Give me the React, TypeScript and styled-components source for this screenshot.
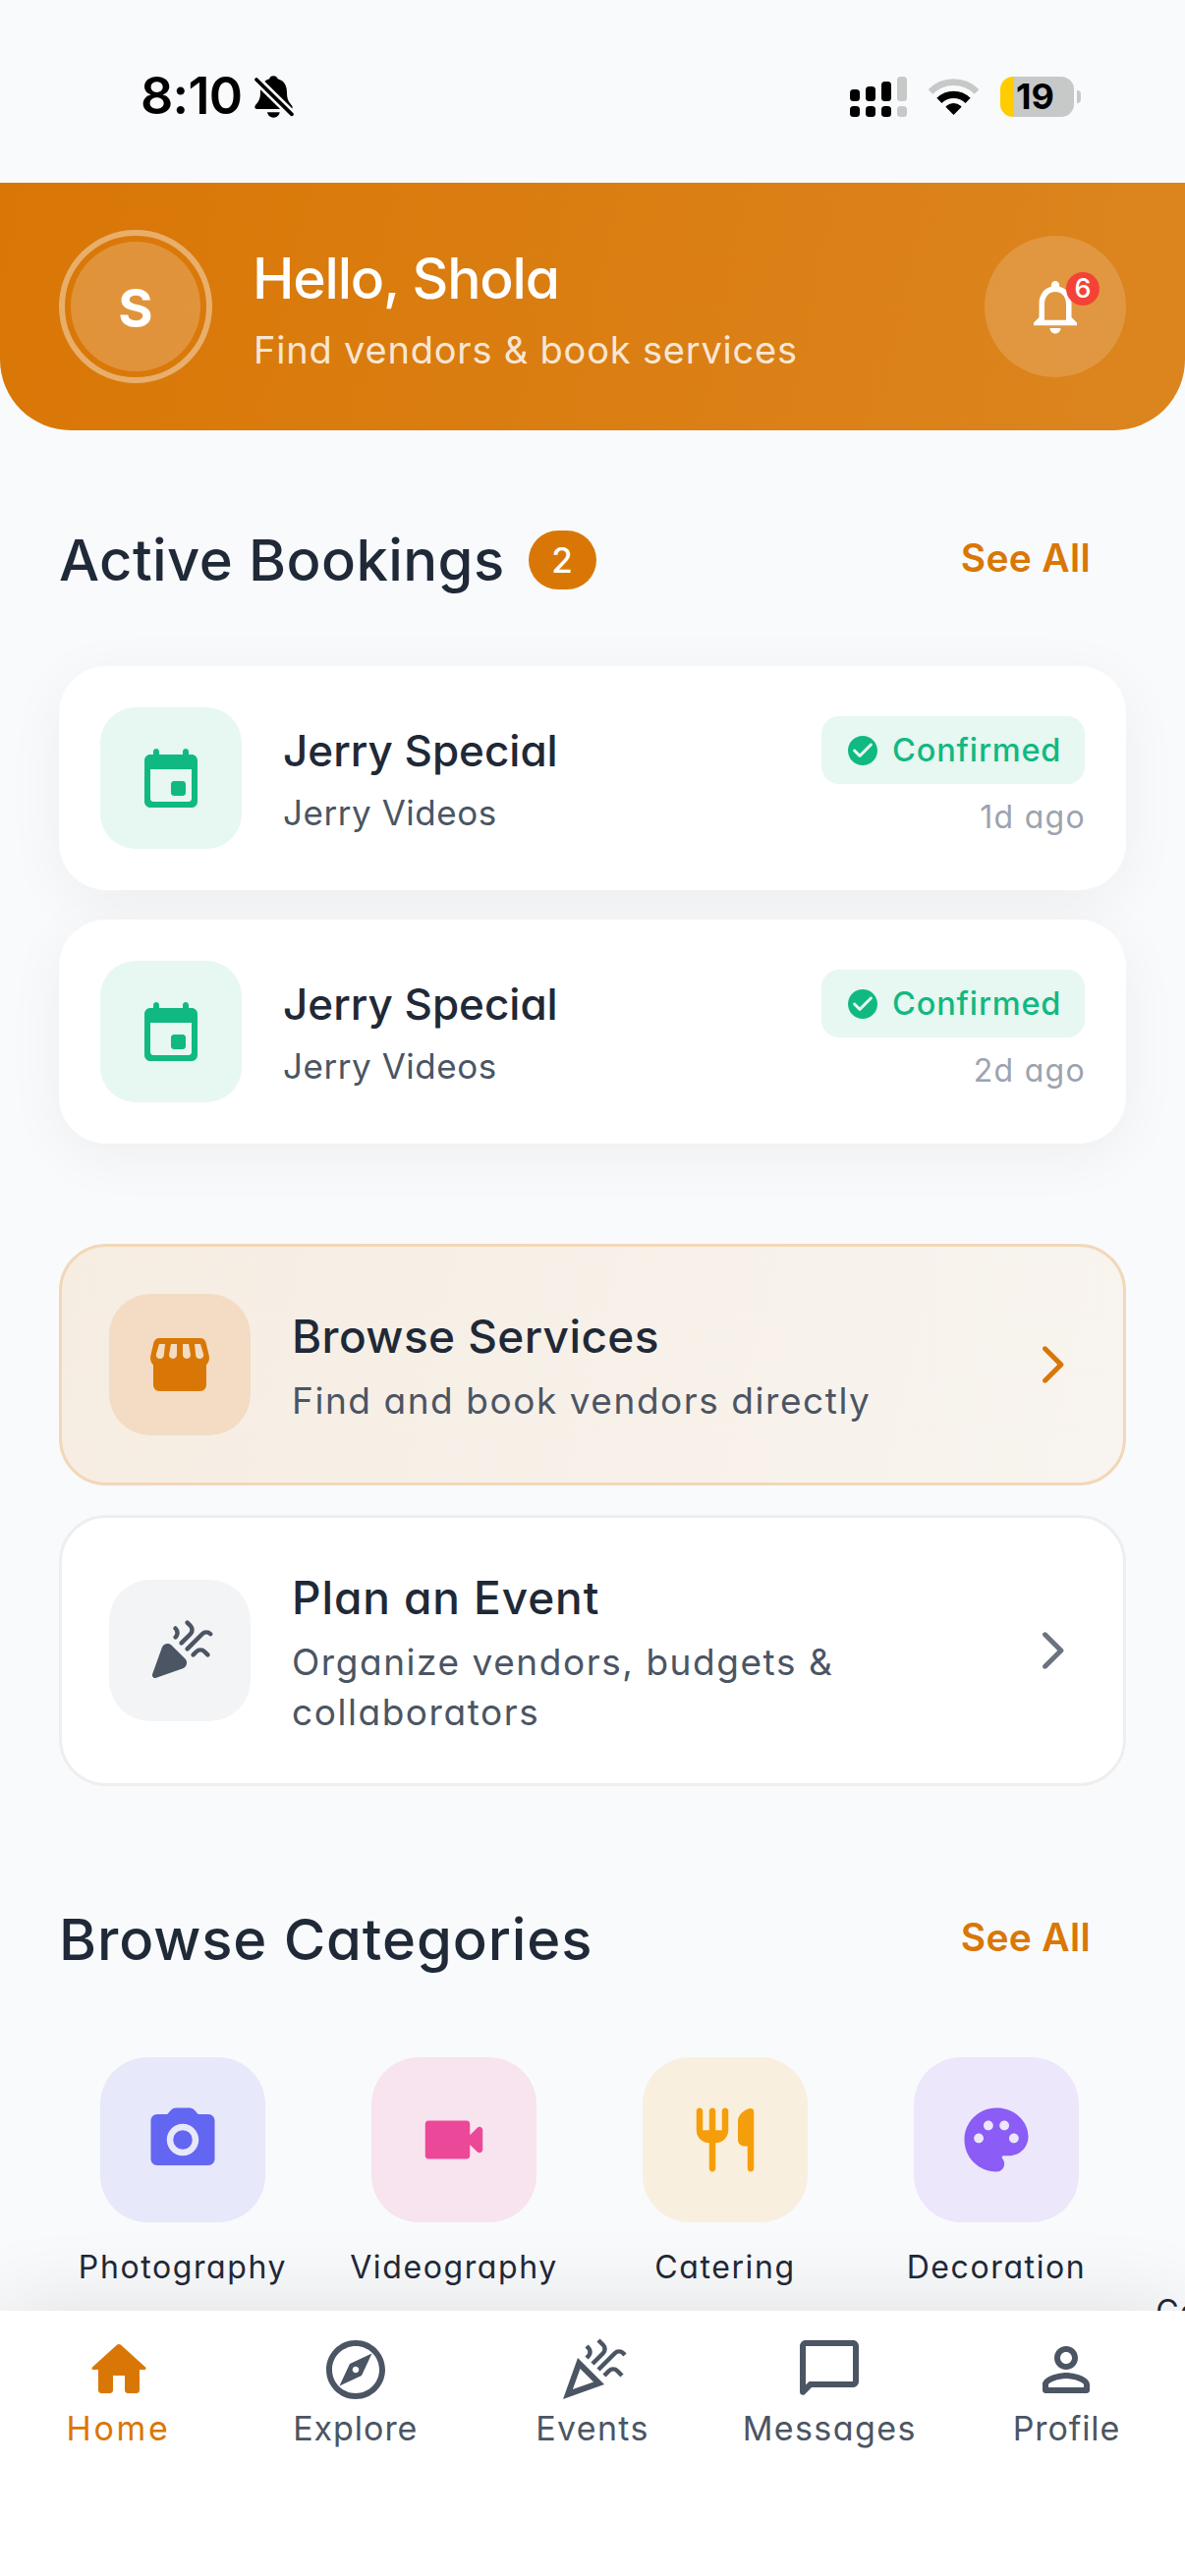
import React from 'react';
import styled, { createGlobalStyle } from 'styled-components';

const color = {
  brand: '#D97706',
  ink: '#1F2937',
  body: '#4B5563',
  muted: '#6B7280',
  faint: '#9CA3AF',
  success: '#10B981',
  surface: '#F9FAFC',
};

const GlobalStyle = createGlobalStyle`
  * { box-sizing: border-box; }
  body {
    margin: 0;
    background: ${color.surface};
    font-family: Inter, "Noto Sans", sans-serif;
    font-feature-settings: "cv11";
    -webkit-font-smoothing: antialiased;
  }
  h1, h2, h3, p { margin: 0; font-weight: inherit; font-size: inherit; }
  button { font: inherit; font-feature-settings: inherit; border: 0; background: none; padding: 0; }
  svg { display: block; flex: none; }
`;

/* ---------- icons ---------- */

const paths = {
  bell: 'M12 22c1.1 0 2-.9 2-2h-4c0 1.1.9 2 2 2zm6-6v-5c0-3.07-1.63-5.64-4.5-6.32V4c0-.83-.67-1.5-1.5-1.5s-1.5.67-1.5 1.5v.68C7.64 5.36 6 7.92 6 11v5l-2 2v1h16v-1l-2-2zm-2 1H8v-6c0-2.48 1.51-4.5 4-4.5s4 2.02 4 4.5v6z',
  event: 'M16 13h-3c-.55 0-1 .45-1 1v3c0 .55.45 1 1 1h3c.55 0 1-.45 1-1v-3c0-.55-.45-1-1-1zm0-10v1H8V3c0-.55-.45-1-1-1s-1 .45-1 1v1H5c-1.11 0-1.99.9-1.99 2L3 20c0 1.1.89 2 2 2h14c1.1 0 2-.9 2-2V6c0-1.1-.9-2-2-2h-1V3c0-.55-.45-1-1-1s-1 .45-1 1zm2 17H6c-.55 0-1-.45-1-1V9h14v10c0 .55-.45 1-1 1z',
  check: 'M12 2C6.48 2 2 6.48 2 12s4.48 10 10 10 10-4.48 10-10S17.52 2 12 2zM9.29 16.29L5.7 12.7c-.39-.39-.39-1.02 0-1.41.39-.39 1.02-.39 1.41 0L10 14.17l6.88-6.88c.39-.39 1.02-.39 1.41 0 .39.39.39 1.02 0 1.41l-7.59 7.59c-.38.39-1.02.39-1.41 0z',
  store: 'M5.05 3h13.9c.9 0 1.7.62 1.9 1.52L21.9 8.9c.25 1 0 2.1-.62 2.88L21 12.1V19a2 2 0 0 1-2 2H5a2 2 0 0 1-2-2v-6.9l-.28-.3c-.64-.8-.86-1.87-.62-2.9L3.15 4.52C3.36 3.63 4.15 3 5.05 3zM5 5h2L6.6 8.8C6.5 9.5 6 10 5.35 10 4.4 10 3.75 9.25 3.98 8.4zM9 5h2v3.7c0 .72-.6 1.3-1.35 1.3-.8 0-1.38-.65-1.3-1.4zM13 5h2l.65 3.6c.08.75-.5 1.4-1.3 1.4-.75 0-1.35-.58-1.35-1.3zM17 5h2l1.02 3.4c.23.85-.42 1.6-1.37 1.6-.65 0-1.15-.5-1.25-1.2z',
  chevron: 'M7.38 21.01c.49.49 1.28.49 1.77 0l8.31-8.31c.39-.39.39-1.02 0-1.41L9.15 2.98c-.49-.49-1.28-.49-1.77 0s-.49 1.28 0 1.77L14.62 12l-7.25 7.25c-.48.48-.48 1.28.01 1.76z',
  camera: 'M12 9a3 3 0 1 0 0 6 3 3 0 0 0 0-6zM20 4h-3.17l-1.24-1.35A1.99 1.99 0 0 0 14.12 2H9.88c-.56 0-1.1.24-1.48.65L7.17 4H4c-1.1 0-2 .9-2 2v12c0 1.1.9 2 2 2h16c1.1 0 2-.9 2-2V6c0-1.1-.9-2-2-2zm-8 13c-2.76 0-5-2.24-5-5s2.24-5 5-5 5 2.24 5 5-2.24 5-5 5z',
  video: 'M17 10.5V7c0-.55-.45-1-1-1H4c-.55 0-1 .45-1 1v10c0 .55.45 1 1 1h12c.55 0 1-.45 1-1v-3.5l2.29 2.29c.63.63 1.71.18 1.71-.71V8.91c0-.89-1.08-1.34-1.71-.71L17 10.5z',
  restaurant: 'M16 6v6c0 1.1.9 2 2 2h1v7c0 .55.45 1 1 1s1-.45 1-1V3.13c0-.65-.61-1.13-1.24-.98C17.6 2.68 16 4.51 16 6zm-5 3H9V3c0-.55-.45-1-1-1s-1 .45-1 1v6H5V3c0-.55-.45-1-1-1s-1 .45-1 1v6c0 2.21 1.79 4 4 4v8c0 .55.45 1 1 1s1-.45 1-1v-8c2.21 0 4-1.79 4-4V3c0-.55-.45-1-1-1s-1 .45-1 1v6z',
  palette: 'M12 2C6.49 2 2 6.49 2 12s4.49 10 10 10c1.38 0 2.5-1.12 2.5-2.5 0-.61-.23-1.2-.64-1.67-.08-.1-.13-.21-.13-.33 0-.28.22-.5.5-.5H16c3.31 0 6-2.69 6-6 0-4.96-4.49-9-10-9zm5.5 11c-.83 0-1.5-.67-1.5-1.5s.67-1.5 1.5-1.5 1.5.67 1.5 1.5-.67 1.5-1.5 1.5zm-3-4c-.83 0-1.5-.67-1.5-1.5S13.67 6 14.5 6s1.5.67 1.5 1.5S15.33 9 14.5 9zM5 11.5c0-.83.67-1.5 1.5-1.5s1.5.67 1.5 1.5S7.33 13 6.5 13 5 12.33 5 11.5zm6-4c0 .83-.67 1.5-1.5 1.5S8 8.33 8 7.5 8.67 6 9.5 6s1.5.67 1.5 1.5z',
  home: 'M10 19v-5h4v5c0 .55.45 1 1 1h3c.55 0 1-.45 1-1v-7h1.7c.46 0 .68-.57.33-.87L12.67 3.6c-.38-.34-.96-.34-1.34 0l-8.36 7.53c-.34.3-.13.87.33.87H5v7c0 .55.45 1 1 1h3c.55 0 1-.45 1-1z',
  explore: 'M12 2C6.48 2 2 6.48 2 12s4.48 10 10 10 10-4.48 10-10S17.52 2 12 2zm0 18c-4.41 0-8-3.59-8-8s3.59-8 8-8 8 3.59 8 8-3.59 8-8 8zm-5.5-2.5l7.51-3.49L17.5 6.5 9.99 9.99 6.5 17.5zm5.5-6.6c.61 0 1.1.49 1.1 1.1s-.49 1.1-1.1 1.1-1.1-.49-1.1-1.1.49-1.1 1.1-1.1z',
  chat: 'M4 4h16v12H5.17L4 17.17V4m0-2c-1.1 0-1.99.9-1.99 2v15.59c0 .89 1.08 1.34 1.71.71L6 18h14c1.1 0 2-.9 2-2V4c0-1.1-.9-2-2-2H4z',
  person: 'M12 6c1.1 0 2 .9 2 2s-.9 2-2 2-2-.9-2-2 .9-2 2-2m0 9c2.7 0 5.8 1.29 6 2v1H6v-.99c.2-.72 3.3-2.01 6-2.01m0-11C9.79 4 8 5.79 8 8s1.79 4 4 4 4-1.79 4-4-1.79-4-4-4zm0 9c-2.67 0-8 1.34-8 4v2c0 .55.45 1 1 1h14c.55 0 1-.45 1-1v-2c0-2.66-5.33-4-8-4z',
  coneSolid: 'M3.99 21.29l9.04-3.23c1.38-.49 1.78-2.26.74-3.3l-4.53-4.53c-1.04-1.04-2.8-.64-3.3.74l-3.23 9.04c-.28.8.48 1.56 1.28 1.28z',
  coneOutline: 'M2 22l14-5-9-9L2 22zm10.35-5.82L5.3 18.7l2.52-7.05 4.53 4.53z',
  people: 'M16 11c1.66 0 3-1.34 3-3s-1.34-3-3-3-3 1.34-3 3 1.34 3 3 3zm-8 0c1.66 0 3-1.34 3-3S9.66 5 8 5 5 6.34 5 8s1.34 3 3 3zm0 2c-2.33 0-7 1.17-7 3.5V19h14v-2.500c0-2.33-4.67-3.500-7-3.500z',
};

type IconName = keyof typeof paths;

const Icon = ({ name, size }: { name: IconName; size: number }) => (
  <svg width={size} height={size} viewBox="0 0 24 24" fill="currentColor" fillRule="evenodd">
    <path d={paths[name]} />
  </svg>
);

const PopperIcon = ({ size, solid }: { size: number; solid?: boolean }) => (
  <svg width={size} height={size} viewBox="0 0 24 24" fill="currentColor" fillRule="evenodd">
    <path d={solid ? paths.coneSolid : paths.coneOutline} />
    <path
      d={
        solid
          ? 'M14.53 11.47l5.06-5.06c.78-.78 2.05-.78 2.83 0M10.5 4.5l.09.09c.78.78.78 2.05 0 2.83l-.06.06M16.53 13.47l1.06-1.06c.78-.78 2.05-.78 2.83 0l1.06 1.06M12.53 9.47l3.06-3.06c.78-.78.78-2.05 0-2.83l-1.06-1.05'
          : 'M14 12l5.59-5.59c.78-.78 2.05-.78 2.83 0l.59.59M10 4l.59.59c.78.78.78 2.05 0 2.83L10 8M16 14l1.59-1.59c.78-.78 2.05-.78 2.83 0L22 14M12 10l3.59-3.59c.78-.78.78-2.05 0-2.83L14 2'
      }
      fill="none"
      stroke="currentColor"
      strokeWidth="1.5"
      strokeLinecap={solid ? 'round' : 'butt'}
    />
  </svg>
);

const SilentIcon = () => (
  <svg width="40" height="43" viewBox="0 0 120 129">
    <path d="M58 1c8 0 12 5 13 9C92 16 99 32 99 52c0 22 6 28 14 38 5 7 4 12-4 12H8c-7 0-9-6-5-12C12 80 18 72 18 52 18 32 26 15 46 10 47 5 50 1 58 1z" />
    <path d="M39 112h38c-1 9-9 16-19 16s-18-7-19-16z" />
    <path d="M-6 0L122 126" stroke={color.surface} strokeWidth="27" />
    <path d="M6 12l108 106" stroke="#000" strokeWidth="11" strokeLinecap="round" />
  </svg>
);

const WifiIcon = () => (
  <svg width="51" height="37" viewBox="0 0 152 111">
    <path d="M5.3 40.3a100 100 0 0 1 141.4 0" fill="none" stroke="#C7C9C9" strokeWidth="20" />
    <path d="M32.2 67.2a62 62 0 0 1 87.6 0" fill="none" stroke="#000" strokeWidth="22" />
    <path d="M76 111L53 88q-2-3 1-5a34 34 0 0 1 44 0q3 2 1 5z" />
  </svg>
);

/* ---------- shell ---------- */

const Screen = styled.div`
  width: 1206px;
  height: 2622px;
  display: flex;
  flex-direction: column;
  overflow: hidden;
  background: ${color.surface};
`;

const Body = styled.main`
  flex: 1;
  min-height: 0;
  overflow: hidden;
  display: flex;
  flex-direction: column;
`;

/* ---------- status bar ---------- */

const StatusBar = styled.div`
  flex: none;
  display: flex;
  justify-content: space-between;
  align-items: center;
  height: 186px;
  padding: 10px 106px 0 143px;
`;

const StatusGroup = styled.div<{ $gap: number }>`
  display: flex;
  align-items: center;
  gap: ${(p) => p.$gap}px;
`;

const Clock = styled.span`
  font-size: 52px;
  font-weight: 600;
  line-height: 60px;
  letter-spacing: -0.7px;
`;

const Signal = styled.div`
  display: flex;
  align-items: flex-end;
  gap: 6px;
`;

const SignalColumn = styled.div`
  display: flex;
  flex-direction: column;
  gap: 5px;
`;

const SignalCell = styled.span<{ $h: number; $off?: boolean }>`
  width: 10px;
  height: ${(p) => p.$h}px;
  border-radius: 3.5px;
  background: ${(p) => (p.$off ? '#C7C9C9' : '#000')};
`;

const BatteryWrap = styled.div`
  display: flex;
  align-items: center;
  gap: 3px;
`;

const Battery = styled.div`
  display: flex;
  align-items: center;
  width: 75px;
  height: 41px;
  padding-left: 16px;
  border-radius: 13px;
  background: linear-gradient(90deg, #ffcc00 14px, #c7c9c9 14px);
  font-size: 36px;
  font-weight: 700;
`;

const BatteryNub = styled.span`
  width: 4px;
  height: 13px;
  border-radius: 0 5px 5px 0;
  background: #c7c9c9;
`;

/* ---------- header ---------- */

const Header = styled.header`
  flex: none;
  display: flex;
  align-items: center;
  height: 252px;
  padding: 0 60px;
  border-radius: 0 0 72px 72px;
  background: linear-gradient(102deg, #d97706, #dc851f);
  color: #fff;
`;

const AvatarRing = styled.div`
  flex: none;
  width: 156px;
  height: 156px;
  padding: 6px;
  border: 6px solid rgba(255, 255, 255, 0.4);
  border-radius: 50%;
`;

const Avatar = styled.div`
  display: flex;
  align-items: center;
  justify-content: center;
  height: 100%;
  padding-top: 3px;
  border-radius: 50%;
  background: rgba(255, 255, 255, 0.2);
  font-size: 54px;
  font-weight: 650;
`;

const Greeting = styled.div`
  flex: 1;
  padding: 3px 0 0 42px;
`;

const Hello = styled.h1`
  margin-left: -1px;
  font-size: 57px;
  font-weight: 500;
  line-height: 84px;
  letter-spacing: -1.2px;
`;

const Tagline = styled.p`
  font-size: 38px;
  font-weight: 400;
  line-height: 60px;
  letter-spacing: 0.8px;
  color: rgba(255, 255, 255, 0.84);
`;

const BellButton = styled.button`
  position: relative;
  display: flex;
  align-items: center;
  justify-content: center;
  width: 144px;
  height: 144px;
  border-radius: 50%;
  background: rgba(255, 255, 255, 0.16);
  color: #fff;
`;

const BellCount = styled.span`
  position: absolute;
  left: 83px;
  top: 37px;
  width: 34px;
  height: 34px;
  border-radius: 50%;
  background: #f44336;
  font-size: 27px;
  font-weight: 500;
  line-height: 34px;
  text-align: center;
`;

/* ---------- sections ---------- */

const Section = styled.section<{ $top: number; $gap: number }>`
  flex: none;
  display: flex;
  flex-direction: column;
  gap: ${(p) => p.$gap}px;
  margin-top: ${(p) => p.$top}px;
`;

const SectionHead = styled.div`
  display: flex;
  align-items: center;
  height: 90px;
  padding: 0 96px 0 60px;
`;

const SectionTitle = styled.h2<{ $track: number }>`
  font-size: 58px;
  font-weight: 500;
  line-height: 88px;
  letter-spacing: ${(p) => p.$track}px;
  color: ${color.ink};
`;

const CountPill = styled.span`
  width: 69px;
  height: 60px;
  margin-left: 24px;
  border-radius: 30px;
  background: ${color.brand};
  color: #fff;
  font-size: 35px;
  font-weight: 500;
  line-height: 60px;
  text-align: center;
`;

const SeeAll = styled.button`
  margin: 0 0 4px auto;
  font-size: 39px;
  font-weight: 600;
  line-height: 60px;
  letter-spacing: 0.3px;
  color: ${color.brand};
`;

const CardList = styled.div`
  display: flex;
  flex-direction: column;
  gap: 30px;
  padding: 0 60px;
`;

const IconTile = styled.div<{ $bg: string; $fg: string; $size?: number; $radius: number }>`
  flex: none;
  display: flex;
  align-items: center;
  justify-content: center;
  width: ${(p) => p.$size ?? 144}px;
  height: ${(p) => p.$size ?? 144}px;
  border-radius: ${(p) => p.$radius}px;
  background: ${(p) => p.$bg};
  color: ${(p) => p.$fg};
`;

const BookingCard = styled.article`
  display: flex;
  align-items: center;
  height: 228px;
  padding: 0 42px;
  border-radius: 48px;
  background: #fff;
  box-shadow: 0 12px 60px rgba(0, 0, 0, 0.05);
`;

const BookingInfo = styled.div`
  flex: 1;
  padding: 4px 0 0 42px;
`;

const BookingTitle = styled.h3`
  font-size: 44px;
  font-weight: 500;
  line-height: 66px;
  letter-spacing: 0;
  color: ${color.ink};
`;

const BookingVendor = styled.p`
  font-size: 35px;
  font-weight: 400;
  line-height: 60px;
  letter-spacing: 0.55px;
  color: ${color.body};
`;

const BookingMeta = styled.div`
  display: flex;
  flex-direction: column;
  align-items: flex-end;
  gap: 9px;
  padding-top: 2px;
`;

const StatusPill = styled.span`
  display: flex;
  align-items: center;
  gap: 12px;
  width: 268px;
  height: 69px;
  padding-left: 24px;
  border-radius: 18px;
  background: #e7f7f1;
  color: ${color.success};
  font-size: 32.5px;
  font-weight: 500;
  letter-spacing: 0.85px;
  white-space: nowrap;
`;

const TimeAgo = styled.span`
  margin-right: -1px;
  font-size: 32px;
  font-weight: 400;
  line-height: 50px;
  letter-spacing: 1.3px;
  color: ${color.faint};
`;

const ActionCard = styled.article<{ $primary?: boolean }>`
  display: flex;
  align-items: center;
  height: ${(p) => (p.$primary ? 246 : 276)}px;
  padding: 0 48px;
  border: 3px solid ${(p) => (p.$primary ? '#f2d7b8' : '#eeeeee')};
  border-radius: 48px;
  background: ${(p) => (p.$primary ? 'linear-gradient(103deg, #f6ede2, #f8f4ef)' : '#fff')};
  color: ${(p) => (p.$primary ? color.brand : color.muted)};
`;

const ActionText = styled.div`
  flex: 1;
  display: flex;
  flex-direction: column;
  gap: 7px;
  padding-left: 42px;
`;

const ActionTitle = styled.h3<{ $track: number }>`
  font-size: 46px;
  font-weight: 500;
  line-height: 66px;
  letter-spacing: ${(p) => p.$track}px;
  color: ${color.ink};
`;

const ActionNote = styled.p`
  max-width: 640px;
  font-size: 37px;
  font-weight: 400;
  line-height: 51px;
  letter-spacing: 1.55px;
  color: ${color.body};
`;

/* ---------- categories ---------- */

const CategoryRow = styled.div`
  display: flex;
  gap: 24px;
  width: 1440px;
  padding-left: 60px;
`;

const Category = styled.div`
  display: flex;
  flex-direction: column;
  align-items: center;
  gap: 23px;
  width: 252px;
`;

const CategoryLabel = styled.span`
  font-size: 32px;
  font-weight: 400;
  line-height: 45px;
  letter-spacing: 1.6px;
  text-align: center;
  color: ${color.ink};
`;

/* ---------- tab bar ---------- */

const TabBar = styled.nav`
  flex: none;
  position: relative;
  display: grid;
  grid-template-columns: repeat(5, 1fr);
  height: 270px;
  padding-top: 24px;
  background: #fff;
  box-shadow: 0 0 90px rgba(0, 0, 0, 0.11);
`;

const Tab = styled.a<{ $active?: boolean }>`
  display: flex;
  flex-direction: column;
  align-items: center;
  color: ${(p) => (p.$active ? color.brand : color.body)};
`;

const TabLabel = styled.span<{ $track: number }>`
  font-size: 34px;
  font-weight: 400;
  line-height: 48px;
  letter-spacing: ${(p) => p.$track}px;
`;

/* ---------- data ---------- */

const signalColumns = [12, 15, 20, 25];

const bookings = [
  { title: 'Jerry Special', vendor: 'Jerry Videos', status: 'Confirmed', time: '1d ago' },
  { title: 'Jerry Special', vendor: 'Jerry Videos', status: 'Confirmed', time: '2d ago' },
];

const categories: { label: string; icon: IconName; fg: string; bg: string }[] = [
  { label: 'Photography', icon: 'camera', fg: '#6366F1', bg: '#E7E8FA' },
  { label: 'Videography', icon: 'video', fg: '#EC4899', bg: '#F7E4EE' },
  { label: 'Catering', icon: 'restaurant', fg: '#F59E0B', bg: '#F9EFDE' },
  { label: 'Decoration', icon: 'palette', fg: '#8B5CF6', bg: '#ECE7FB' },
  { label: 'Event Co\u2011ordination', icon: 'people', fg: '#10B981', bg: '#E0F4EF' },
];

const tabs: { label: string; icon: IconName | 'popper'; track: number }[] = [
  { label: 'Home', icon: 'home', track: 2.7 },
  { label: 'Explore', icon: 'explore', track: 0.95 },
  { label: 'Events', icon: 'popper', track: 1.3 },
  { label: 'Messages', icon: 'chat', track: 1.4 },
  { label: 'Profile', icon: 'person', track: 0.9 },
];

/* ---------- app ---------- */

export default function App() {
  return (
    <Screen>
      <GlobalStyle />
      <StatusBar>
        <StatusGroup $gap={13}>
          <Clock>8:10</Clock>
          <SilentIcon />
        </StatusGroup>
        <StatusGroup $gap={22}>
          <Signal>
            {signalColumns.map((h, i) => (
              <SignalColumn key={h}>
                <SignalCell $h={h} $off={i === 3} />
                <SignalCell $h={11} $off={i === 3} />
              </SignalColumn>
            ))}
          </Signal>
          <WifiIcon />
          <BatteryWrap>
            <Battery>19</Battery>
            <BatteryNub />
          </BatteryWrap>
        </StatusGroup>
      </StatusBar>

      <Body>
        <Header>
          <AvatarRing>
            <Avatar>S</Avatar>
          </AvatarRing>
          <Greeting>
            <Hello>Hello, Shola</Hello>
            <Tagline>Find vendors &amp; book services</Tagline>
          </Greeting>
          <BellButton>
            <Icon name="bell" size={66} />
            <BellCount>6</BellCount>
          </BellButton>
        </Header>

        <Section $top={87} $gap={63}>
          <SectionHead>
            <SectionTitle $track={0.4}>Active Bookings</SectionTitle>
            <CountPill>2</CountPill>
            <SeeAll>See All</SeeAll>
          </SectionHead>
          <CardList>
            {bookings.map((b) => (
              <BookingCard key={b.time}>
                <IconTile $bg="#E7F7F1" $fg={color.success} $radius={36}>
                  <Icon name="event" size={72} />
                </IconTile>
                <BookingInfo>
                  <BookingTitle>{b.title}</BookingTitle>
                  <BookingVendor>{b.vendor}</BookingVendor>
                </BookingInfo>
                <BookingMeta>
                  <StatusPill>
                    <Icon name="check" size={36} />
                    {b.status}
                  </StatusPill>
                  <TimeAgo>{b.time}</TimeAgo>
                </BookingMeta>
              </BookingCard>
            ))}
          </CardList>
        </Section>

        <Section $top={102} $gap={0}>
          <CardList>
            <ActionCard $primary>
              <IconTile $bg="#F3DCC3" $fg={color.brand} $radius={42}>
                <Icon name="store" size={72} />
              </IconTile>
              <ActionText>
                <ActionTitle $track={0.4}>Browse Services</ActionTitle>
                <ActionNote>Find and book vendors directly</ActionNote>
              </ActionText>
              <Icon name="chevron" size={48} />
            </ActionCard>
            <ActionCard>
              <IconTile $bg="#F3F4F6" $fg={color.body} $radius={42}>
                <PopperIcon size={72} solid />
              </IconTile>
              <ActionText>
                <ActionTitle $track={0.9}>Plan an Event</ActionTitle>
                <ActionNote>Organize vendors, budgets &amp; collaborators</ActionNote>
              </ActionText>
              <Icon name="chevron" size={48} />
            </ActionCard>
          </CardList>
        </Section>

        <Section $top={111} $gap={75}>
          <SectionHead>
            <SectionTitle $track={0.9}>Browse Categories</SectionTitle>
            <SeeAll>See All</SeeAll>
          </SectionHead>
          <CategoryRow>
            {categories.map((c) => (
              <Category key={c.label}>
                <IconTile $bg={c.bg} $fg={c.fg} $size={168} $radius={48}>
                  <Icon name={c.icon} size={78} />
                </IconTile>
                <CategoryLabel>{c.label}</CategoryLabel>
              </Category>
            ))}
          </CategoryRow>
        </Section>
      </Body>

      <TabBar>
        {tabs.map((t, i) => (
          <Tab key={t.label} $active={i === 0}>
            {t.icon === 'popper' ? <PopperIcon size={72} /> : <Icon name={t.icon} size={72} />}
            <TabLabel $track={t.track}>{t.label}</TabLabel>
          </Tab>
        ))}
      </TabBar>
    </Screen>
  );
}
